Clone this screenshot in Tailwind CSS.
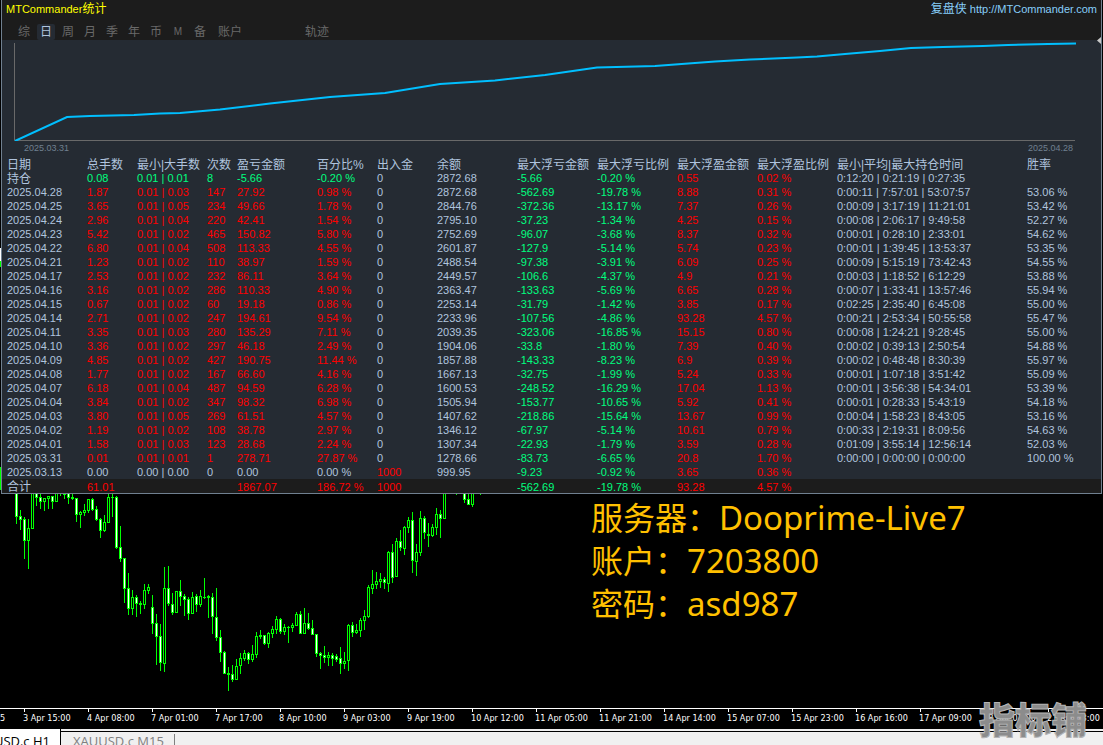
<!DOCTYPE html>
<html lang="zh-CN">
<head>
  <meta charset="UTF-8">
  <meta name="viewport" content="width=device-width, initial-scale=1">
  <title>MTCommander统计</title>
  <script src="https://cdn.jsdelivr.net/npm/@tailwindcss/browser@4"></script>
</head>
<body class="relative flex min-h-screen flex-col overflow-x-hidden bg-black font-['Liberation_Sans','Noto_Sans_CJK_SC',sans-serif] text-[11px] text-[#b0c4de]">

  <!-- Candles peeking out left of the panel -->
  <div class="absolute left-0 top-[248px] h-[19px] w-px border-b-6 border-[#00ff00] bg-white"></div>
  <div class="absolute left-0 top-[467px] h-[23px] w-px bg-[#00ff00]"></div>

  <!-- Statistics panel -->
  <section class="relative mx-px border-x border-b border-[#708090] bg-[#252b33]">
    <header class="h-10 bg-[#1c1c1c]">
      <div class="flex h-6 justify-between px-1 leading-[18px]">
        <h1 class="text-[#ffff00]">MTCommander<span class="text-xs leading-[18px]">统计</span></h1>
        <a href="http://MTCommander.com" class="text-[#87cefa]"><span class="text-xs leading-[18px]">复盘侠</span> http://MTCommander.com</a>
      </div>
      <nav class="flex gap-1 pl-[13px] text-xs text-[#696969]">
        <button class="h-4 w-[18px] leading-4">综</button>
        <button class="h-4 w-[18px] rounded-xs bg-[#252b33] leading-4 text-[#b0c4de]">日</button>
        <button class="h-4 w-[18px] leading-4">周</button>
        <button class="h-4 w-[18px] leading-4">月</button>
        <button class="h-4 w-[18px] leading-4">季</button>
        <button class="h-4 w-[18px] leading-4">年</button>
        <button class="h-4 w-[18px] leading-4">币</button>
        <button class="h-4 w-[18px] text-[10px] leading-4">M</button>
        <button class="h-4 w-[18px] leading-4">备</button>
        <button class="h-4 w-[34px] leading-4">账户</button>
        <button class="ml-13 h-4 w-7 leading-4">轨迹</button>
      </nav>
    </header>
    <svg class="absolute right-0 top-[37px] h-[7px] w-1" viewBox="0 0 4 7"><path d="M4 0v7L0 3.500z" fill="#c8c8c8"/></svg>

    <!-- Balance curve -->
    <svg class="block h-[101px] w-full" viewBox="2 40 1099 101" preserveAspectRatio="none" fill="none">
      <path d="M14.500 43V140.500H1075" stroke="#696969"/>
      <polyline stroke="#00bfff" stroke-width="2" points="15,141 67,117 90,116 134,115 160,113.500 180,113 220,109.500 270,103.500 330,97 385,93 440,84 495,80.500 545,75 597,67.500 655,66 715,61.500 750,59.500 797,57.500 817,56.500 845,54 880,51 911,48 943,47 983,46 1008,45 1048,44 1076,43.500"/>
    </svg>
    <div class="flex h-4 justify-between pl-[22px] pr-7 text-[9px] leading-[14px] text-[#708090]">
      <span>2025.03.31</span><span>2025.04.28</span>
    </div>

    <table class="w-full table-fixed border-collapse text-left leading-[14px] whitespace-nowrap">
      <colgroup>
        <col class="w-[85px]"><col class="w-[50px]"><col class="w-[70px]"><col class="w-[30px]"><col class="w-[80px]">
        <col class="w-[60px]"><col class="w-[60px]"><col class="w-[80px]"><col class="w-[80px]"><col class="w-[80px]">
        <col class="w-[80px]"><col class="w-[80px]"><col class="w-[190px]"><col>
      </colgroup>
      <thead class="text-xs leading-3">
        <tr>
          <th class="h-[14px] pl-[5px] pt-0.5 font-normal">日期</th>
          <th class="pt-0.5 font-normal">总手数</th>
          <th class="pt-0.5 font-normal">最小|大手数</th>
          <th class="pt-0.5 font-normal">次数</th>
          <th class="pt-0.5 font-normal">盈亏金额</th>
          <th class="pt-0.5 font-normal">百分比%</th>
          <th class="pt-0.5 font-normal">出入金</th>
          <th class="pt-0.5 font-normal">余额</th>
          <th class="pt-0.5 font-normal">最大浮亏金额</th>
          <th class="pt-0.5 font-normal">最大浮亏比例</th>
          <th class="pt-0.5 font-normal">最大浮盈金额</th>
          <th class="pt-0.5 font-normal">最大浮盈比例</th>
          <th class="pt-0.5 font-normal">最小|平均|最大持仓时间</th>
          <th class="pt-0.5 font-normal">胜率</th>
        </tr>
      </thead>
      <tbody id="rows"></tbody>
      <tfoot class="bg-[#1c1c1c] leading-3 text-[#ff0000]">
        <tr>
          <td class="h-[14px] pl-[5px] pt-0.5 text-xs leading-3 text-[#b0c4de]">合计</td>
          <td class="pt-0.5">61.01</td>
          <td></td>
          <td></td>
          <td class="pt-0.5">1867.07</td>
          <td class="pt-0.5">186.72 %</td>
          <td class="pt-0.5">1000</td>
          <td></td>
          <td class="pt-0.5 text-[#00ff7f]">-562.69</td>
          <td class="pt-0.5 text-[#00ff7f]">-19.78 %</td>
          <td class="pt-0.5">93.28</td>
          <td class="pt-0.5">4.57 %</td>
          <td></td>
          <td></td>
        </tr>
      </tfoot>
    </table>
  </section>

  <!-- Price chart -->
  <main class="flex flex-1 gap-[101px]">
    <svg id="candles" class="h-[214px] w-[490px] shrink-0" viewBox="0 494 490 214" shape-rendering="crispEdges"></svg>
    <div class="pt-0.5 font-['Noto_Sans','Noto_Sans_CJK_SC',sans-serif] text-[32px] leading-[43px] whitespace-nowrap text-[#ffc000]">
      <p>服务器：<span class="text-[33px]">Dooprime-Live7</span></p>
      <p>账户：<span class="text-[33px]">7203800</span></p>
      <p>密码：<span class="text-[33px]">asd987</span></p>
    </div>
  </main>

  <!-- Time axis -->
  <div id="axis" class="flex h-[21px] overflow-hidden border-t border-white font-['DejaVu_Sans_Condensed','DejaVu_Sans',sans-serif] text-[9px] leading-[18px] whitespace-nowrap text-white">
    <span class="w-[23px] shrink-0">5</span>
  </div>

  <!-- Chart tabs -->
  <footer class="flex h-4 overflow-hidden bg-[#f0f0f0] font-['Open_Sans','Noto_Sans',sans-serif] text-[13px] whitespace-nowrap">
    <button class="flex w-[61px] justify-end border-r border-black bg-white pr-2.5 pt-[3px] leading-[18px] text-black">XAUUSD.c H1</button>
    <div class="mt-0.5 flex flex-1 items-start border-t border-black">
      <button class="mt-0.5 h-[18px] border-r border-[#808080] pb-1 pl-3 pr-2.5 leading-[14px] text-[#808080]">XAUUSD.c M15</button>
    </div>
  </footer>

  <div class="absolute bottom-0.5 right-4 font-['Noto_Sans_CJK_SC',sans-serif] text-[36px] leading-[50px] font-black text-[#8c8c8c] [-webkit-text-stroke:1px_#b4b4b4]">指标铺</div>

  <script>
    const rows = [
      ['持仓', '0.08', '0.01 | 0.01', '8', '-5.66', '-0.20 %', '0', '2872.68', '-5.66', '-0.20 %', '0.55', '0.02 %', '0:12:20 | 0:21:19 | 0:27:35', ''],
      ['2025.04.28', '1.87', '0.01 | 0.03', '147', '27.92', '0.98 %', '0', '2872.68', '-562.69', '-19.78 %', '8.88', '0.31 %', '0:00:11 | 7:57:01 | 53:07:57', '53.06 %'],
      ['2025.04.25', '3.65', '0.01 | 0.05', '234', '49.66', '1.78 %', '0', '2844.76', '-372.36', '-13.17 %', '7.37', '0.26 %', '0:00:09 | 3:17:19 | 11:21:01', '53.42 %'],
      ['2025.04.24', '2.96', '0.01 | 0.04', '220', '42.41', '1.54 %', '0', '2795.10', '-37.23', '-1.34 %', '4.25', '0.15 %', '0:00:08 | 2:06:17 | 9:49:58', '52.27 %'],
      ['2025.04.23', '5.42', '0.01 | 0.02', '465', '150.82', '5.80 %', '0', '2752.69', '-96.07', '-3.68 %', '8.37', '0.32 %', '0:00:01 | 0:28:10 | 2:33:01', '54.62 %'],
      ['2025.04.22', '6.80', '0.01 | 0.04', '508', '113.33', '4.55 %', '0', '2601.87', '-127.9', '-5.14 %', '5.74', '0.23 %', '0:00:01 | 1:39:45 | 13:53:37', '53.35 %'],
      ['2025.04.21', '1.23', '0.01 | 0.02', '110', '38.97', '1.59 %', '0', '2488.54', '-97.38', '-3.91 %', '6.09', '0.25 %', '0:00:09 | 5:15:19 | 73:42:43', '54.55 %'],
      ['2025.04.17', '2.53', '0.01 | 0.02', '232', '86.11', '3.64 %', '0', '2449.57', '-106.6', '-4.37 %', '4.9', '0.21 %', '0:00:03 | 1:18:52 | 6:12:29', '53.88 %'],
      ['2025.04.16', '3.16', '0.01 | 0.02', '286', '110.33', '4.90 %', '0', '2363.47', '-133.63', '-5.69 %', '6.65', '0.28 %', '0:00:07 | 1:33:41 | 13:57:46', '55.94 %'],
      ['2025.04.15', '0.67', '0.01 | 0.02', '60', '19.18', '0.86 %', '0', '2253.14', '-31.79', '-1.42 %', '3.85', '0.17 %', '0:02:25 | 2:35:40 | 6:45:08', '55.00 %'],
      ['2025.04.14', '2.71', '0.01 | 0.02', '247', '194.61', '9.54 %', '0', '2233.96', '-107.56', '-4.86 %', '93.28', '4.57 %', '0:00:21 | 2:53:34 | 50:55:58', '55.47 %'],
      ['2025.04.11', '3.35', '0.01 | 0.03', '280', '135.29', '7.11 %', '0', '2039.35', '-323.06', '-16.85 %', '15.15', '0.80 %', '0:00:08 | 1:24:21 | 9:28:45', '55.00 %'],
      ['2025.04.10', '3.36', '0.01 | 0.02', '297', '46.18', '2.49 %', '0', '1904.06', '-33.8', '-1.80 %', '7.39', '0.40 %', '0:00:02 | 0:39:13 | 2:50:54', '54.88 %'],
      ['2025.04.09', '4.85', '0.01 | 0.02', '427', '190.75', '11.44 %', '0', '1857.88', '-143.33', '-8.23 %', '6.9', '0.39 %', '0:00:02 | 0:48:48 | 8:30:39', '55.97 %'],
      ['2025.04.08', '1.77', '0.01 | 0.02', '167', '66.60', '4.16 %', '0', '1667.13', '-32.75', '-1.99 %', '5.24', '0.33 %', '0:00:01 | 1:07:18 | 3:51:42', '55.09 %'],
      ['2025.04.07', '6.18', '0.01 | 0.04', '487', '94.59', '6.28 %', '0', '1600.53', '-248.52', '-16.29 %', '17.04', '1.13 %', '0:00:01 | 3:56:38 | 54:34:01', '53.39 %'],
      ['2025.04.04', '3.84', '0.01 | 0.02', '347', '98.32', '6.98 %', '0', '1505.94', '-153.77', '-10.65 %', '5.92', '0.41 %', '0:00:01 | 0:28:33 | 5:43:19', '54.18 %'],
      ['2025.04.03', '3.80', '0.01 | 0.05', '269', '61.51', '4.57 %', '0', '1407.62', '-218.86', '-15.64 %', '13.67', '0.99 %', '0:00:04 | 1:58:23 | 8:43:05', '53.16 %'],
      ['2025.04.02', '1.19', '0.01 | 0.02', '108', '38.78', '2.97 %', '0', '1346.12', '-67.97', '-5.14 %', '10.61', '0.79 %', '0:00:33 | 2:19:31 | 8:09:56', '54.63 %'],
      ['2025.04.01', '1.58', '0.01 | 0.03', '123', '28.68', '2.24 %', '0', '1307.34', '-22.93', '-1.79 %', '3.59', '0.28 %', '0:01:09 | 3:55:14 | 12:56:14', '52.03 %'],
      ['2025.03.31', '0.01', '0.01 | 0.01', '1', '278.71', '27.87 %', '0', '1278.66', '-83.73', '-6.65 %', '20.8', '1.70 %', '0:00:00 | 0:00:00 | 0:00:00', '100.00 %'],
      ['2025.03.13', '0.00', '0.00 | 0.00', '0', '0.00', '0.00 %', '1000', '999.95', '-9.23', '-0.92 %', '3.65', '0.36 %', '', '']
    ];

    const RED = 'text-[#ff0000]';
    const GREEN = 'text-[#00ff7f]';

    function cellClass(row, i) {
      const profit = parseFloat(row[4]);
      if (i === 0) return row[0] === '持仓' ? 'h-[14px] pl-[5px] pt-0.5 text-xs leading-3' : 'h-[14px] pl-[5px]';
      if (i <= 5) return profit > 0 ? RED : profit < 0 ? GREEN : '';
      if (i === 6) return row[6] === '0' ? '' : RED;
      if (i === 8 || i === 9) return GREEN;
      if (i === 10 || i === 11) return RED;
      return '';
    }

    document.getElementById('rows').innerHTML = rows.map(row =>
      '<tr>' + row.map((text, i) => `<td class="${cellClass(row, i)}">${text}</td>`).join('') + '</tr>'
    ).join('');

    // x, high, body top, body bottom, low, 1 = falling candle
    const candles = [
      [16,490,490,517,524,1],[20,510,516,520,530,1],[24,517,519,541,559,1],[28,519,528,541,569,0],[32,490,490,529,529,0],
      [36,490,490,498,506,1],[40,490,497,502,509,1],[44,498,498,502,511,0],[48,496,496,499,509,0],[52,496,496,502,509,1],
      [56,490,490,502,502,0],[60,490,490,492,496,0],[64,490,493,495,499,0],[68,490,490,498,504,1],[72,490,497,499,500,1],
      [76,498,498,515,522,1],[80,511,512,515,528,0],[84,504,510,513,516,0],[88,499,499,511,513,0],[92,498,499,510,511,1],
      [96,506,509,520,521,1],[100,518,519,531,538,1],[104,515,522,531,532,0],[108,490,497,523,523,0],[112,490,497,498,517,0],
      [116,496,497,548,549,1],[120,526,547,559,562,1],[124,558,558,589,603,1],[128,573,588,609,615,1],[132,590,597,609,615,0],
      [136,595,597,604,617,1],[140,601,603,605,614,0],[144,584,590,605,609,0],[148,584,587,591,594,0],[152,595,607,624,634,1],
      [156,614,623,637,665,1],[160,624,636,663,671,1],[164,567,588,664,672,0],[168,566,588,604,606,1],[172,593,604,613,615,1],
      [176,591,591,613,613,0],[180,580,591,597,606,1],[184,594,596,600,616,1],[188,597,599,614,620,1],[192,592,597,614,614,0],
      [196,594,596,605,612,1],[200,590,596,605,607,0],[204,578,597,598,599,0],[208,595,596,598,618,0],[212,593,597,617,634,1],
      [216,588,617,638,641,1],[220,630,637,653,662,1],[224,651,652,674,674,1],[228,667,673,675,691,0],[232,665,674,680,682,1],
      [236,659,666,680,680,0],[240,653,658,666,674,0],[244,650,653,659,661,0],[248,652,653,660,664,1],[252,645,654,660,662,0],
      [256,632,636,655,658,0],[260,630,635,637,639,0],[264,635,635,644,645,1],[268,632,633,644,648,0],[272,626,629,634,638,0],
      [276,616,619,630,634,0],[280,618,619,632,634,1],[284,624,627,632,635,0],[288,626,627,628,643,0],[292,623,625,628,632,0],
      [296,612,614,626,626,0],[300,611,614,634,634,1],[304,608,623,634,634,0],[308,613,623,629,630,1],[312,620,628,635,635,1],
      [316,634,634,654,657,1],[320,652,653,656,669,1],[324,646,655,658,663,1],[328,652,655,658,666,0],[332,653,655,659,666,1],
      [336,654,656,660,662,1],[340,647,658,664,674,1],[344,652,661,664,669,0],[348,624,625,661,671,0],[352,622,625,633,637,1],
      [356,624,630,633,634,0],[360,618,620,631,637,0],[364,610,616,621,630,0],[368,585,587,617,618,0],[372,570,584,589,594,0],
      [376,572,581,585,589,0],[380,573,579,582,588,0],[384,577,579,583,589,1],[388,551,552,584,592,0],[392,544,552,578,583,1],
      [396,538,541,577,577,0],[400,530,541,548,551,1],[404,526,527,549,555,0],[408,517,520,528,533,0],[412,512,520,561,573,1],
      [416,544,552,562,576,0],[420,511,518,553,556,0],[424,516,518,533,539,1],[428,523,534,536,547,0],[432,524,527,536,537,0],
      [436,508,514,528,535,0],[440,510,514,519,538,1],[444,490,490,519,519,0],[456,490,490,492,495,0],[464,490,490,500,503,1],
      [468,490,499,505,505,1],[472,490,490,505,507,0],[480,490,490,492,495,0]
    ];

    document.getElementById('candles').innerHTML = candles.map(([x, high, top, bottom, low, down]) => {
      const inner = bottom - top > 2
        ? `<rect x="${x}" y="${top + 1}" width="1" height="${bottom - top - 2}" fill="${down ? '#fff' : '#000'}"/>`
        : '';
      return `<rect x="${x}" y="${high}" width="1" height="${low - high}" fill="#0f0"/>`
        + `<rect x="${x - 1}" y="${top}" width="3" height="${bottom - top}" fill="#0f0"/>` + inner;
    }).join('');

    const times = ['3 Apr 15:00', '4 Apr 08:00', '7 Apr 01:00', '7 Apr 17:00', '8 Apr 10:00', '9 Apr 03:00', '9 Apr 19:00',
      '10 Apr 12:00', '11 Apr 05:00', '11 Apr 21:00', '14 Apr 14:00', '15 Apr 07:00', '15 Apr 23:00', '16 Apr 16:00',
      '17 Apr 09:00', '18 Apr 01:00', '21 Apr 18:00'];

    document.getElementById('axis').innerHTML += times.map(t =>
      `<span class="relative w-16 shrink-0"><i class="absolute left-px top-0 h-[3px] w-px bg-white"></i>${t}</span>`
    ).join('');
  </script>

</body>
</html>
